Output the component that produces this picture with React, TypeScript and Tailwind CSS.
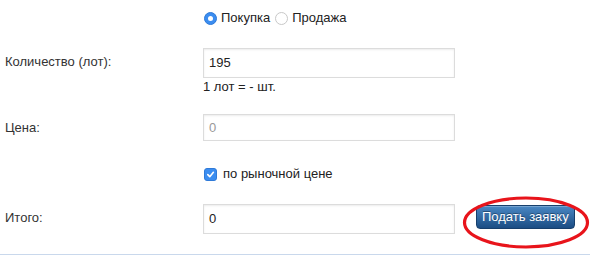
import React, { useState } from "react";

const font = { fontFamily: '"Liberation Sans", Arial, sans-serif' };

const Row = ({ label, children, className = "" }: { label?: string; children: React.ReactNode; className?: string }) => (
  <div className={`flex ${className}`}>
    <div className="w-[203px] shrink-0 pl-[5px] text-[13px] text-[#333] leading-[28px]">{label}</div>
    <div className="flex-1">{children}</div>
  </div>
);

const Field = ({ value, muted, h = "h-[30px]" }: { value: string; muted?: boolean; h?: string }) => (
  <div
    className={`w-[252px] ${h} border border-[#dcdcdc] bg-white px-[5px] flex items-center text-[13px] shadow-[inset_0_1px_2px_rgba(0,0,0,0.08)] ${
      muted ? "text-[#999]" : "text-[#222]"
    }`}
  >
    {value}
  </div>
);

export default function App() {
  const [side, setSide] = useState("buy");
  const [market, setMarket] = useState(true);

  return (
    <div style={font} className="w-[590px] h-[258px] bg-white relative overflow-hidden">
      <div className="h-[255px] border-b border-[#c9d8ec] pt-[8px]">
        <Row className="h-[20px]">
          <div className="flex items-center h-[20px] text-[13px] text-[#222] pl-[1px]">
            <button onClick={() => setSide("buy")} className="flex items-center">
              <span
                className={`w-[13px] h-[13px] rounded-full flex items-center justify-center ${
                  side === "buy" ? "bg-[#3b8df0] border border-[#2f7ad8]" : "bg-white border border-[#c8c8c8]"
                }`}
              >
                {side === "buy" && <span className="w-[5px] h-[5px] rounded-full bg-white" />}
              </span>
              <span className="ml-[4px]">Покупка</span>
            </button>
            <button onClick={() => setSide("sell")} className="flex items-center ml-[5px]">
              <span
                className={`w-[13px] h-[13px] rounded-full flex items-center justify-center ${
                  side === "sell" ? "bg-[#3b8df0] border border-[#2f7ad8]" : "bg-white border border-[#c8c8c8]"
                }`}
              >
                {side === "sell" && <span className="w-[5px] h-[5px] rounded-full bg-white" />}
              </span>
              <span className="ml-[4px]">Продажа</span>
            </button>
          </div>
        </Row>

        <Row label="Количество (лот):" className="mt-[20px]">
          <Field value="195" />
          <div className="text-[13px] text-[#222] leading-[16px] mt-[1px]">1 лот = - шт.</div>
        </Row>

        <Row label="Цена:" className="mt-[19px]">
          <Field value="0" muted h="h-[27px]" />
        </Row>

        <Row className="mt-[25px]">
          <button onClick={() => setMarket(!market)} className="flex items-center h-[14px] text-[13px] text-[#222] pl-[1px]">
            <span
              className={`w-[13px] h-[13px] rounded-[3px] flex items-center justify-center ${
                market ? "bg-[#3b8df0] border border-[#2f7ad8]" : "bg-white border border-[#c8c8c8]"
              }`}
            >
              {market && (
                <svg width="9" height="9" viewBox="0 0 10 10">
                  <path d="M2 5.2 L4.2 7.4 L8.2 2.6" fill="none" stroke="white" strokeWidth="1.8" strokeLinecap="round" strokeLinejoin="round" />
                </svg>
              )}
            </span>
            <span className="ml-[6px]">по рыночной цене</span>
          </button>
        </Row>

        <Row label="Итого:" className="mt-[23px]">
          <div className="flex items-start">
            <Field value="0" />
            <button className="ml-[21px] mt-[1px] h-[24px] px-[5px] rounded-[4px] border border-[#173f6c] bg-gradient-to-b from-[#4a88c4] to-[#1b4d84] text-white text-[13px] [text-shadow:0_-1px_0_rgba(0,0,0,0.35)] shadow-[inset_0_1px_0_rgba(255,255,255,0.25)]">
              Подать заявку
            </button>
          </div>
        </Row>
      </div>

      <svg className="absolute left-[461px] top-[195px] pointer-events-none" width="130" height="56" viewBox="0 0 130 56">
        <ellipse cx="65" cy="27.5" rx="61.5" ry="24.5" fill="none" stroke="#e8141b" strokeWidth="3.2" />
      </svg>
    </div>
  );
}
